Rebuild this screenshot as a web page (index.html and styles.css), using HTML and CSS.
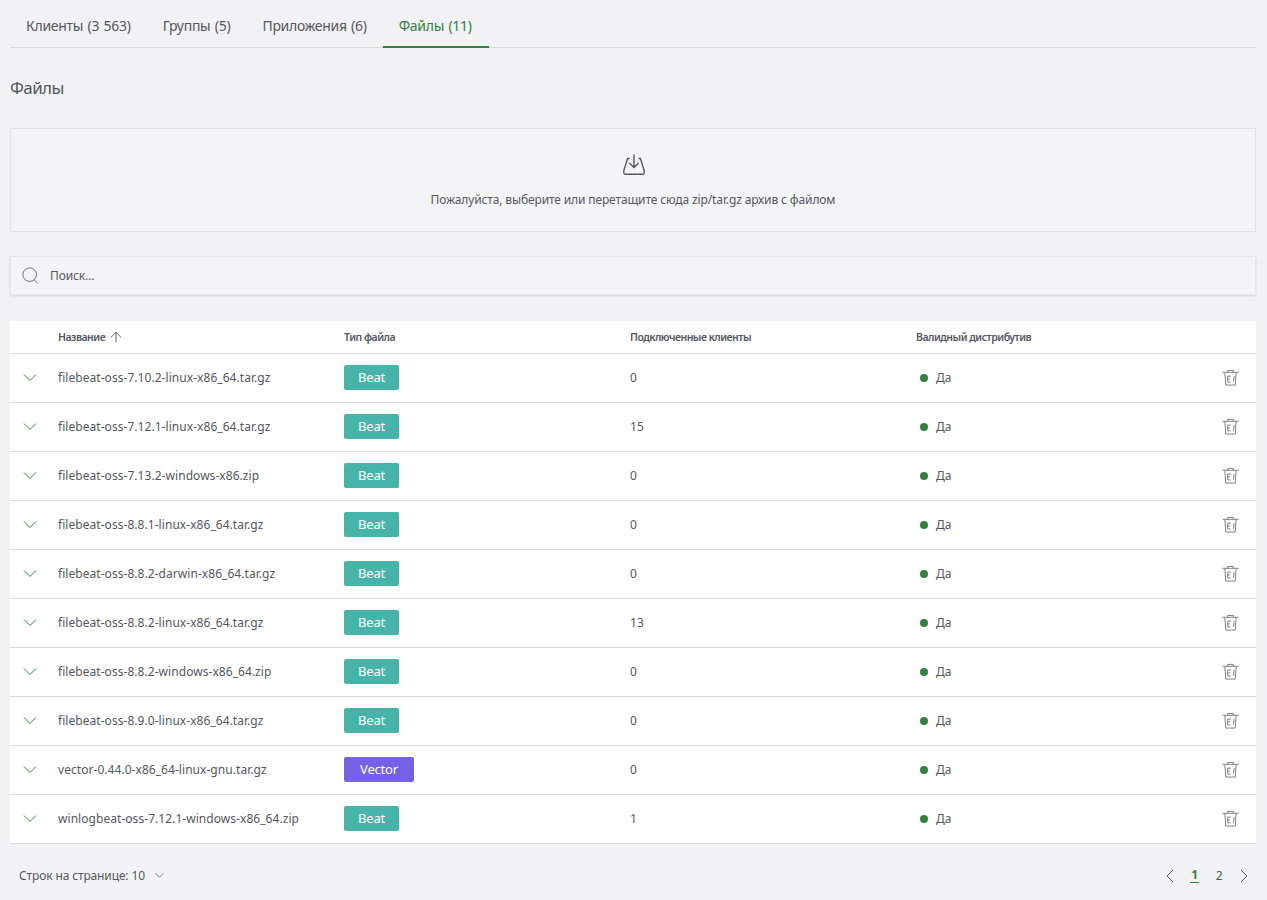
FILE: index.html
```html
<!DOCTYPE html>
<html lang="ru">
<head>
<meta charset="utf-8">
<title>Файлы</title>
<link rel="stylesheet" href="styles.css">
</head>
<body>
<svg class="sprite" width="0" height="0" aria-hidden="true">
  <symbol id="chev" viewBox="0 0 16 16"><path d="M2 4.5 8 10.5l6-6" fill="none" stroke="currentColor" stroke-width="1"/></symbol>
  <symbol id="trash" viewBox="0 0 18 18"><path d="M.5 3.5h17M6 3.5V1.5h6v2M3 3.5l1 13.5h10l1-13.5M6 7.5h3.5M6 7.5v6.2h3M6 10.5h2.6M12.8 7.5l-.6 6" fill="none" stroke="currentColor" stroke-width="1"/></symbol>
</svg>
<nav class="tabs">
  <a class="tab">Клиенты (3 563)</a>
  <a class="tab">Группы (5)</a>
  <a class="tab">Приложения (6)</a>
  <a class="tab active">Файлы (11)</a>
</nav>
<h1 class="title">Файлы</h1>
<section class="drop">
  <svg class="drop-icon" width="24" height="24" viewBox="0 0 24 24" fill="none" stroke="#55585c" stroke-width="1.4"><path d="M7.5 5.5H5.6L1.8 17.5v2.3c0 .9.5 1.4 1.4 1.4h17.6c.9 0 1.4-.5 1.4-1.4v-2.3L18.4 5.5h-1.9"/><path d="M12 1.5v12.5M7.5 10l4.5 4.5 4.5-4.5"/></svg>
  <p class="drop-text">Пожалуйста, выберите или перетащите сюда zip/tar.gz архив с файлом</p>
</section>
<div class="search">
  <svg width="17" height="17" viewBox="0 0 20 20" fill="none" stroke="#6b6e72" stroke-width="1.15"><circle cx="9" cy="9" r="8"/><path d="M14 14.8l4.6 4.6"/></svg>
  <span>Поиск...</span>
</div>
<table class="grid">
  <colgroup><col class="c-exp"><col class="c-w"><col class="c-w"><col class="c-w"><col><col class="c-del"></colgroup>
  <thead>
    <tr>
      <th></th>
      <th>Название <svg class="sort" width="12" height="12" viewBox="0 0 14 14" fill="none" stroke="#55585c" stroke-width="1.1"><path d="M7 13V1.5M1 7.5 7 1.5l6 6"/></svg></th>
      <th>Тип файла</th>
      <th>Подключенные клиенты</th>
      <th>Валидный дистрибутив</th>
      <th></th>
    </tr>
  </thead>
  <tbody>
    <tr><td class="exp"><svg width="16" height="16"><use href="#chev"/></svg></td><td>filebeat-oss-7.10.2-linux-x86_64.tar.gz</td><td><span class="badge beat">Beat</span></td><td>0</td><td><span class="dot"></span>Да</td><td class="del"><svg width="17" height="17"><use href="#trash"/></svg></td></tr>
    <tr><td class="exp"><svg width="16" height="16"><use href="#chev"/></svg></td><td>filebeat-oss-7.12.1-linux-x86_64.tar.gz</td><td><span class="badge beat">Beat</span></td><td>15</td><td><span class="dot"></span>Да</td><td class="del"><svg width="17" height="17"><use href="#trash"/></svg></td></tr>
    <tr><td class="exp"><svg width="16" height="16"><use href="#chev"/></svg></td><td>filebeat-oss-7.13.2-windows-x86.zip</td><td><span class="badge beat">Beat</span></td><td>0</td><td><span class="dot"></span>Да</td><td class="del"><svg width="17" height="17"><use href="#trash"/></svg></td></tr>
    <tr><td class="exp"><svg width="16" height="16"><use href="#chev"/></svg></td><td>filebeat-oss-8.8.1-linux-x86_64.tar.gz</td><td><span class="badge beat">Beat</span></td><td>0</td><td><span class="dot"></span>Да</td><td class="del"><svg width="17" height="17"><use href="#trash"/></svg></td></tr>
    <tr><td class="exp"><svg width="16" height="16"><use href="#chev"/></svg></td><td>filebeat-oss-8.8.2-darwin-x86_64.tar.gz</td><td><span class="badge beat">Beat</span></td><td>0</td><td><span class="dot"></span>Да</td><td class="del"><svg width="17" height="17"><use href="#trash"/></svg></td></tr>
    <tr><td class="exp"><svg width="16" height="16"><use href="#chev"/></svg></td><td>filebeat-oss-8.8.2-linux-x86_64.tar.gz</td><td><span class="badge beat">Beat</span></td><td>13</td><td><span class="dot"></span>Да</td><td class="del"><svg width="17" height="17"><use href="#trash"/></svg></td></tr>
    <tr><td class="exp"><svg width="16" height="16"><use href="#chev"/></svg></td><td>filebeat-oss-8.8.2-windows-x86_64.zip</td><td><span class="badge beat">Beat</span></td><td>0</td><td><span class="dot"></span>Да</td><td class="del"><svg width="17" height="17"><use href="#trash"/></svg></td></tr>
    <tr><td class="exp"><svg width="16" height="16"><use href="#chev"/></svg></td><td>filebeat-oss-8.9.0-linux-x86_64.tar.gz</td><td><span class="badge beat">Beat</span></td><td>0</td><td><span class="dot"></span>Да</td><td class="del"><svg width="17" height="17"><use href="#trash"/></svg></td></tr>
    <tr><td class="exp"><svg width="16" height="16"><use href="#chev"/></svg></td><td>vector-0.44.0-x86_64-linux-gnu.tar.gz</td><td><span class="badge vector">Vector</span></td><td>0</td><td><span class="dot"></span>Да</td><td class="del"><svg width="17" height="17"><use href="#trash"/></svg></td></tr>
    <tr><td class="exp"><svg width="16" height="16"><use href="#chev"/></svg></td><td>winlogbeat-oss-7.12.1-windows-x86_64.zip</td><td><span class="badge beat">Beat</span></td><td>1</td><td><span class="dot"></span>Да</td><td class="del"><svg width="17" height="17"><use href="#trash"/></svg></td></tr>
  </tbody>
</table>
<footer class="foot">
  <div class="per-page">Строк на странице: 10 <svg width="11" height="11"><use href="#chev"/></svg></div>
  <div class="pager">
    <svg width="10" height="14" viewBox="0 0 10 14" fill="none" stroke="#55585c" stroke-width="1"><path d="M8 1 2 7l6 6"/></svg>
    <span class="page current">1</span>
    <span class="page">2</span>
    <svg width="10" height="14" viewBox="0 0 10 14" fill="none" stroke="#55585c" stroke-width="1"><path d="M2 1l6 6-6 6"/></svg>
  </div>
</footer>
</body>
</html>
```
FILE: styles.css
```css
* { box-sizing: border-box; }
html, body { margin: 0; }
body {
  height: 900px;
  overflow: hidden;
  padding: 0 11px 0 10px;
  background: #f1f2f4;
  color: #55585c;
  font: 12px/16px "Noto Sans", "Liberation Sans", sans-serif;
  letter-spacing: -0.13px;
}
.sprite { position: absolute; }
.tabs {
  display: flex;
  height: 48px;
  border-bottom: 1px solid #d8dadd;
}
.tab {
  height: 48px;
  padding: 17px 16px 0;
  font-size: 14px;
  line-height: 17px;
  color: #55585c;
  letter-spacing: -0.28px;
  word-spacing: 1px;
}
.active { color: #35803f; border-bottom: 2px solid #35803f; padding-right: 17px; }
.title {
  margin: 30px 0 31px;
  font-size: 17px;
  line-height: 19px;
  font-weight: 400;
  letter-spacing: -0.6px;
}
.drop {
  height: 104px;
  border: 1px solid #e2e3e6;
  background: #f3f4f6;
  display: flex;
  flex-direction: column;
  align-items: center;
  padding-top: 24px;
}
.drop-icon { display: block; margin-left: 2px; }
.drop-text { margin: 15px 0 0; }
.search {
  height: 39px;
  margin-top: 24px;
  padding: 0 11px;
  display: flex;
  align-items: center;
  gap: 11px;
  background: #f3f4f6;
  border: 1px solid #e6e7ea;
  box-shadow: 0 1px 2px rgba(0, 0, 0, .12);
}
.grid {
  width: 100%;
  margin-top: 26px;
  table-layout: fixed;
  border-collapse: collapse;
  background: #fff;
}
.c-exp { width: 48px; }
.c-w { width: 286px; }
.c-del { width: 50px; }
th, td { padding: 0; text-align: left; border-bottom: 1px solid #d8dadd; }
th {
  height: 32px;
  font-size: 10.5px;
  font-weight: 600;
  letter-spacing: -0.5px;
}
.sort { vertical-align: -2px; margin-left: 3px; }
td { height: 49px; letter-spacing: 0.05px; }
.exp { padding-left: 12px; color: #35803f; }
.exp svg, .del svg { display: block; }
.del { color: #76797d; padding-left: 16px; }
.badge {
  display: inline-block;
  height: 25px;
  line-height: 24px;
  border-radius: 2px;
  color: #fff;
  font-size: 13px;
  letter-spacing: -0.2px;
  text-align: center;
  vertical-align: middle;
}
.beat { width: 55px; background: #46b4a9; }
.vector { width: 70px; background: #7561e6; }
.dot {
  display: inline-block;
  width: 8px;
  height: 8px;
  margin: 0 8px 0 4px;
  border-radius: 50%;
  background: #35803f;
}
.foot {
  height: 56px;
  display: flex;
  align-items: center;
  justify-content: space-between;
  padding: 8px 7px 0 9px;
}
.per-page { display: flex; align-items: center; gap: 9px; }
.per-page svg { color: #55585c; }
.pager { display: flex; align-items: center; gap: 15.5px; }
.page { width: 9px; text-align: center; }
.current { color: #35803f; font-weight: 700; border-bottom: 1px solid #35803f; line-height: 14px; }
```
